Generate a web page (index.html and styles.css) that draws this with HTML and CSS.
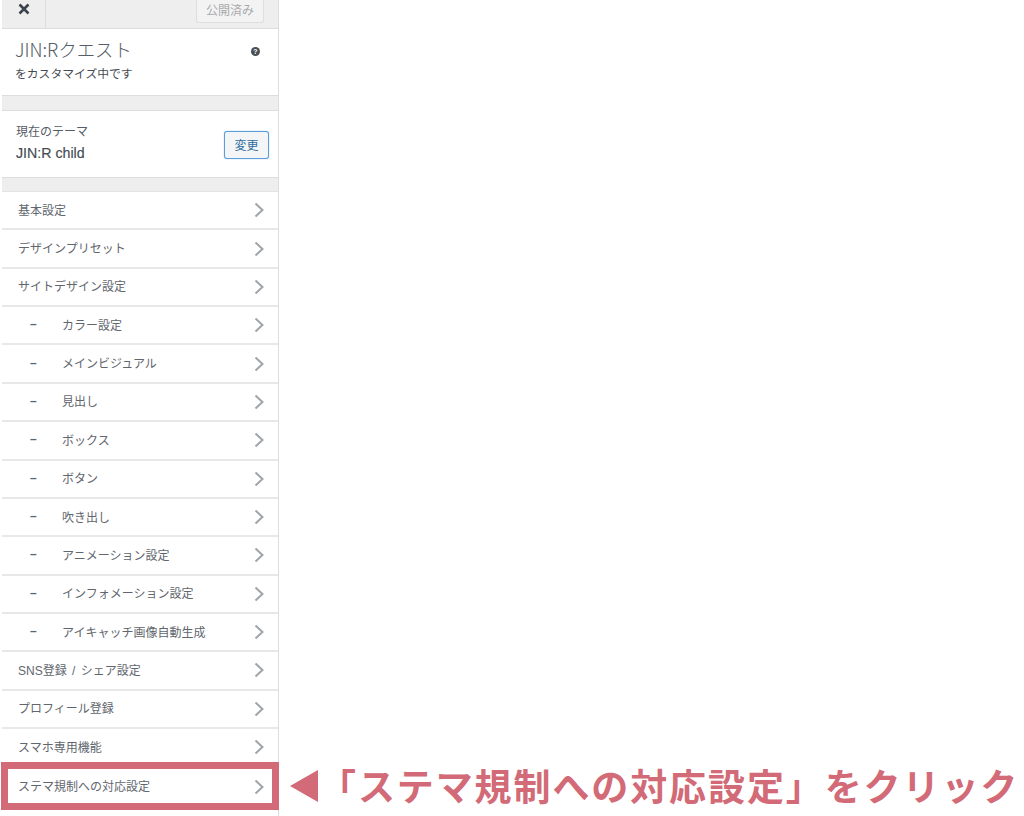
FILE: index.html
```html
<!DOCTYPE html>
<html lang="ja">
<head>
<meta charset="utf-8">
<title>JIN:R</title>
<link rel="stylesheet" href="styles.css">
</head>
<body>
<div class="page">
  <aside class="sidebar">
    <header class="topbar">
      <div class="close">
        <svg width="12" height="12" viewBox="0 0 12 12"><path d="M1.5 1.5l9 9M10.5 1.5l-9 9" stroke="#3c434a" stroke-width="2.6" fill="none"/></svg>
      </div>
      <div class="publish">公開済み</div>
    </header>
    <section class="title">
      <div class="title-text">
        <div class="site">JIN:Rクエスト</div>
        <div class="sub">をカスタマイズ中です</div>
      </div>
      <span class="help">?</span>
    </section>
    <section class="theme">
      <div>
        <div class="theme-label">現在のテーマ</div>
        <div class="theme-name">JIN:R child</div>
      </div>
      <div class="change">変更</div>
    </section>
    <ul class="menu">
      <li class="row"><span>基本設定</span><svg class="chev" viewBox="0 0 10 16"><path d="M1.5 1.5L8.5 8l-7 6.5"/></svg></li>
      <li class="row"><span>デザインプリセット</span><svg class="chev" viewBox="0 0 10 16"><path d="M1.5 1.5L8.5 8l-7 6.5"/></svg></li>
      <li class="row"><span>サイトデザイン設定</span><svg class="chev" viewBox="0 0 10 16"><path d="M1.5 1.5L8.5 8l-7 6.5"/></svg></li>
      <li class="row sub-row"><i>–</i><span>カラー設定</span><svg class="chev" viewBox="0 0 10 16"><path d="M1.5 1.5L8.5 8l-7 6.5"/></svg></li>
      <li class="row sub-row"><i>–</i><span>メインビジュアル</span><svg class="chev" viewBox="0 0 10 16"><path d="M1.5 1.5L8.5 8l-7 6.5"/></svg></li>
      <li class="row sub-row"><i>–</i><span>見出し</span><svg class="chev" viewBox="0 0 10 16"><path d="M1.5 1.5L8.5 8l-7 6.5"/></svg></li>
      <li class="row sub-row"><i>–</i><span>ボックス</span><svg class="chev" viewBox="0 0 10 16"><path d="M1.5 1.5L8.5 8l-7 6.5"/></svg></li>
      <li class="row sub-row"><i>–</i><span>ボタン</span><svg class="chev" viewBox="0 0 10 16"><path d="M1.5 1.5L8.5 8l-7 6.5"/></svg></li>
      <li class="row sub-row"><i>–</i><span>吹き出し</span><svg class="chev" viewBox="0 0 10 16"><path d="M1.5 1.5L8.5 8l-7 6.5"/></svg></li>
      <li class="row sub-row"><i>–</i><span>アニメーション設定</span><svg class="chev" viewBox="0 0 10 16"><path d="M1.5 1.5L8.5 8l-7 6.5"/></svg></li>
      <li class="row sub-row"><i>–</i><span>インフォメーション設定</span><svg class="chev" viewBox="0 0 10 16"><path d="M1.5 1.5L8.5 8l-7 6.5"/></svg></li>
      <li class="row sub-row"><i>–</i><span>アイキャッチ画像自動生成</span><svg class="chev" viewBox="0 0 10 16"><path d="M1.5 1.5L8.5 8l-7 6.5"/></svg></li>
      <li class="row"><span>SNS登録 / シェア設定</span><svg class="chev" viewBox="0 0 10 16"><path d="M1.5 1.5L8.5 8l-7 6.5"/></svg></li>
      <li class="row"><span>プロフィール登録</span><svg class="chev" viewBox="0 0 10 16"><path d="M1.5 1.5L8.5 8l-7 6.5"/></svg></li>
      <li class="row"><span>スマホ専用機能</span><svg class="chev" viewBox="0 0 10 16"><path d="M1.5 1.5L8.5 8l-7 6.5"/></svg></li>
      <li class="row last"><span>ステマ規制への対応設定</span><svg class="chev" viewBox="0 0 10 16"><path d="M1.5 1.5L8.5 8l-7 6.5"/></svg>
        <div class="highlight"></div>
      </li>
    </ul>
  </aside>
  <div class="callout">
    <svg class="arrow" width="30" height="34" viewBox="0 0 30 34"><path d="M1 17L28.5 1.2c.3-.2.5 0 .5.3v31c0 .3-.2.5-.5.3z" fill="#d36a77"/></svg>
    <span class="callout-text">「ステマ規制への対応設定」をクリック</span>
  </div>
</div>
</body>
</html>
```
FILE: styles.css
```css
* { box-sizing: border-box; }
html, body { margin: 0; padding: 0; background: #fff; }
body { font-family: "Noto Sans CJK JP", "Liberation Sans", sans-serif; color: #50575e; }
.page { width: 1024px; height: 816px; display: flex; overflow: hidden; position: relative; }

.sidebar { width: 277px; height: 816px; flex: none; margin-left: 2px; border-right: 1px solid #dddddd; background: #eeeeee; display: flex; flex-direction: column; }

.topbar { height: 29px; flex: none; background: #eeeeee; border-bottom: 1px solid #dddddd; display: flex; justify-content: space-between; }
.close { width: 44px; height: 28px; border-right: 1px solid #dddddd; display: flex; align-items: flex-start; justify-content: center; padding: 3px 0 0; }
.publish { width: 68px; height: 23px; margin-right: 14px; background: #f3f3f3; border: 1px solid #dedede; border-top: none; border-radius: 0 0 3px 3px; color: #a7aaad; font-size: 12px; line-height: 20px; text-align: center; }

.title { height: 67px; flex: none; background: #fff; border-bottom: 1px solid #dddddd; padding: 7px 18px 0 13px; display: flex; justify-content: space-between; align-items: flex-start; }
.site { font-size: 18.4px; line-height: 26px; font-weight: 300; color: #555d66; }
.sub { font-size: 11.8px; line-height: 17px; margin-top: 2px; font-weight: 400; color: #444b52; }
.help { width: 9px; height: 9px; margin-top: 11px; border-radius: 50%; background: #4a4f54; color: #fff; font-size: 7px; line-height: 9px; font-weight: 700; text-align: center; font-family: "Liberation Sans", sans-serif; }

.theme { height: 68px; margin-top: 14px; flex: none; background: #fff; border-top: 1px solid #dddddd; border-bottom: 1px solid #dddddd; padding: 11px 9px 0 14px; display: flex; justify-content: space-between; align-items: flex-start; }
.theme-label { font-size: 12px; line-height: 18px; color: #555d66; }
.theme-name { font-size: 14.2px; line-height: 18px; margin-top: 4px; color: #444b52; font-family: "Liberation Sans", "Noto Sans CJK JP", sans-serif; -webkit-text-stroke: 0.15px #444b52; }
.change { width: 45px; height: 28px; margin-top: 9px; border: 1px solid #5b9dd9; border-radius: 3px; background: #f3f5f6; color: #2f6f9f; font-size: 12px; line-height: 26px; text-align: center; box-shadow: 0 0 1px #5b9dd9; }

.menu { list-style: none; flex: 1; margin: 13px 0 0; padding: 0; background: #fff; border-top: 1px solid #e4e4e4; }
.row { position: relative; height: 38.37px; display: flex; align-items: center; padding: 0 14px 0 16px; border-bottom: 2px solid #e8e8e8; font-size: 12px; color: #5f666d; font-family: "Liberation Sans", "Noto Sans CJK JP", sans-serif; word-spacing: 2px; }
.row span { flex: 1; margin-bottom: 2px; }
.row i { width: 44px; font-style: normal; font-weight: 700; padding-left: 12px; flex: none; margin-bottom: 2px; }
.chev { width: 10px; height: 16px; flex: none; fill: none; stroke: #a0a5aa; stroke-width: 2; }
.last { border-bottom: none; }
.highlight { position: absolute; left: -1px; right: -1px; top: -5px; height: 48px; border: 7px solid #d36a77; pointer-events: none; }

.callout { position: absolute; left: 289px; top: 753px; display: flex; align-items: center; height: 64px; }
.arrow { flex: none; margin-top: 2px; }
.callout-text { font-size: 37px; line-height: 64px; font-weight: 700; letter-spacing: 1.9px; color: #d36a77; white-space: nowrap; }
```
